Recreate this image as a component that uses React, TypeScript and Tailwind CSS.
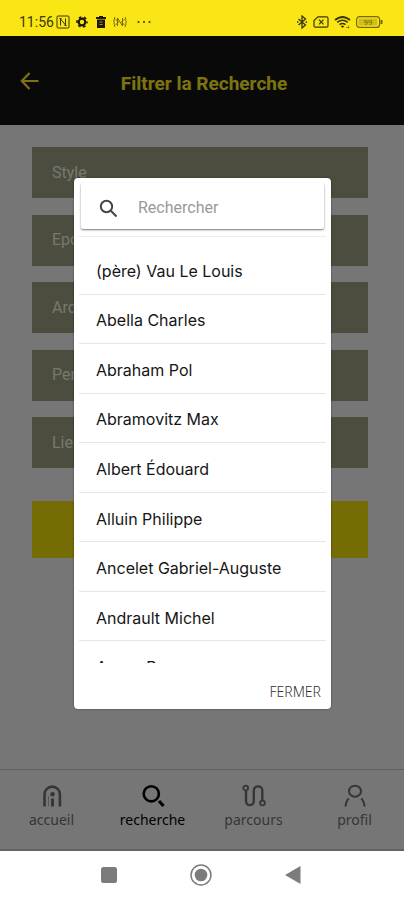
import React, { useState } from "react";

const fields = ["Style", "Epoque", "Architecte", "Periode", "Lieu"];

const architects = [
  "(père) Vau Le Louis",
  "Abella Charles",
  "Abraham Pol",
  "Abramovitz Max",
  "Albert Édouard",
  "Alluin Philippe",
  "Ancelet Gabriel-Auguste",
  "Andrault Michel",
  "Anger Roger",
];

function StatusBar() {
  return (
    <div className="flex h-9 items-end justify-between bg-[#fae614] pr-[21px] pb-[6px] pl-[19px] text-[#3b370c]">
      <div className="flex h-4 items-center">
        <span className="w-[37px] font-['Roboto',sans-serif] text-[14px] leading-4">11:56</span>
        <svg width="14" height="14" viewBox="0 0 14 14" fill="none" stroke="currentColor" strokeWidth="1">
          <rect x="1" y="1" width="12" height="12" rx="1" />
          <path d="M4.500 10.500V4l5 6V3.500M3.500 3.500h2M8.500 10.500h2" />
        </svg>
        <svg className="ml-[6px]" width="12" height="12" viewBox="0 0 12 12" fill="none" stroke="#1c1a05">
          <circle cx="6" cy="6" r="3.300" strokeWidth="2.200" />
          <circle cx="6" cy="6" r="5" strokeWidth="1.600" strokeDasharray="2.600 2.640" strokeDashoffset="1.300" />
        </svg>
        <svg className="ml-[7px]" width="12" height="12" viewBox="0 0 12 12" fill="#1c1a05">
          <path d="M4 0h4v1h3v2H1V1h3zM2 3.500h8V12H2z" />
          <path d="M4.500 6h3M4.500 8.500h3" stroke="#a6990d" strokeWidth="1" />
        </svg>
        <svg className="ml-[6px]" width="14" height="12" viewBox="0 0 14 12" fill="none" stroke="#756b0c" strokeWidth="1">
          <path d="M2 1C.6 4 .6 8 2 11M12 1c1.400 3 1.400 7 0 10M4.500 10V2l5 8V2M2.500 3l3 3-3 3M11.500 3l-3 3 3 3" />
        </svg>
        <svg className="ml-[10px]" width="14" height="4" viewBox="0 0 14 4" fill="currentColor">
          <circle cx="1.500" cy="2" r="1" />
          <circle cx="7" cy="2" r="1" />
          <circle cx="12.500" cy="2" r="1" />
        </svg>
      </div>
      <div className="flex h-4 items-center">
        <svg width="10" height="14" viewBox="0 0 10 14" fill="none" stroke="currentColor" strokeWidth="1.300">
          <path d="M1.500 4l7 6L5 13V1l3.500 3-7 6" />
          <path d="M0 7h1.500M8.500 7H10" />
        </svg>
        <svg className="ml-[6px]" width="16" height="12" viewBox="0 0 16 12" fill="none" stroke="currentColor" strokeWidth="1.200">
          <path d="M5 .8h8.500q1.500 0 1.500 1.500v7.400q0 1.500-1.500 1.500h-11Q1 11.200 1 9.700V4.500z" />
          <path d="M6 3.700l4.500 4.600M10.500 3.700L6 8.300" />
        </svg>
        <svg className="ml-[5px]" width="17" height="13" viewBox="0 0 17 13" fill="none" stroke="currentColor">
          <path d="M1 4Q8.500-2 16 4" strokeWidth="2" />
          <path d="M3.200 6.300q5.300-4.300 10.600 0M5.500 8.700q3-2.400 6 0" strokeWidth="1.500" />
          <path d="M6.800 10.200q1.700-1.200 3.400 0L8.500 12z" fill="currentColor" stroke="none" />
          <path d="M12 11.500h3.500M14.500 9.500v3" strokeWidth="0.800" opacity="0.600" />
        </svg>
        <svg className="ml-[5px]" width="27" height="12" viewBox="0 0 27 12" fill="none" stroke="#75690c">
          <rect x="0.600" y="0.600" width="23" height="10.800" rx="3" strokeWidth="1.200" />
          <rect x="2.500" y="2.500" width="19" height="7" rx="1" fill="#cfbf16" stroke="none" />
          <path d="M25.500 4v4" strokeWidth="2" />
          <text x="12" y="9" textAnchor="middle" fontSize="8" fontFamily="Roboto" fill="#75690c" stroke="none">99</text>
        </svg>
      </div>
    </div>
  );
}

function HomeIcon() {
  return (
    <svg width="20" height="22" viewBox="0 0 20 22" fill="none" stroke="currentColor" strokeWidth="2.600">
      <path d="M2.500 21.500V9.300a7.700 7.700 0 0 1 15.400 0v12.200" />
      <path d="M6.500 21.500V11" strokeWidth="1" opacity="0.500" />
      <path d="M10.500 13.500v8" strokeWidth="3" />
      <circle cx="10.500" cy="9.300" r="2.200" fill="currentColor" stroke="none" />
    </svg>
  );
}

function SearchTabIcon() {
  return (
    <svg width="24" height="24" viewBox="0 0 24 24" fill="none" stroke="currentColor">
      <circle cx="10.300" cy="9.800" r="7.600" strokeWidth="2.600" />
      <path d="M18 17l4.500 5" strokeWidth="3.200" />
    </svg>
  );
}

function RouteIcon() {
  return (
    <svg width="24" height="24" viewBox="0 0 24 24" fill="none" stroke="currentColor" strokeWidth="2.400">
      <circle cx="3.700" cy="4" r="2.400" strokeWidth="1.800" />
      <circle cx="20.500" cy="19" r="2.400" strokeWidth="1.800" />
      <path d="M4 6.500V17c0 5.500 7.800 5.500 7.800 0V6.500c0-5.500 8.500-5.500 8.500 0v10" />
    </svg>
  );
}

function ProfileIcon() {
  return (
    <svg width="24" height="24" viewBox="0 0 24 24" fill="none" stroke="currentColor" strokeWidth="2">
      <ellipse cx="12" cy="7.200" rx="6" ry="5.500" />
      <path d="M5.800 14.500Q3 17 2.500 22.500M18.200 14.500q2.800 2.500 3.300 8" />
    </svg>
  );
}

const tabs = [
  { label: "accueil", Icon: HomeIcon },
  { label: "recherche", Icon: SearchTabIcon },
  { label: "parcours", Icon: RouteIcon },
  { label: "profil", Icon: ProfileIcon },
];

function ArchitectDialog() {
  const [query, setQuery] = useState("");
  const shown = architects.filter((a) => a.toLowerCase().includes(query.toLowerCase()));
  return (
    <div className="absolute inset-0 flex items-center justify-center bg-black/50 pr-[73px] pl-[74px]">
      <div role="dialog" aria-label="Architecte" className="w-full max-w-md rounded-[4px] bg-white pt-[5px] shadow-[0_0_2px_#0008]">
        <label className="mx-[7px] flex h-[46px] items-center rounded-[2px] bg-white pl-[18px] shadow-[0_1px_2px_#0008]">
          <svg className="mt-1 shrink-0" width="19" height="19" viewBox="0 0 19 19" fill="none" stroke="#444" strokeWidth="2">
            <circle cx="7.500" cy="7.500" r="5.700" />
            <path d="M11.800 11.800l5.700 5.700" />
          </svg>
          <input
            aria-label="Rechercher"
            placeholder="Rechercher"
            value={query}
            onChange={(e) => setQuery(e.target.value)}
            className="mt-1 ml-5 w-full min-w-0 bg-transparent font-['Roboto',sans-serif] text-[16px] leading-5 outline-none placeholder:text-[#999]"
          />
        </label>
        <div className="mx-[5px] mt-[7px] h-[427px] overflow-hidden border-t border-[#ececec] pt-2">
          <ul className="grid h-[446px] grid-rows-9">
            {shown.map((name) => (
              <li key={name} className="border-b border-[#e6e6e6]">
                <button className="h-full w-full truncate pt-[3px] pl-[17px] text-left font-['Inter',sans-serif] text-[16px] leading-5 text-[#161616]">
                  {name}
                </button>
              </li>
            ))}
          </ul>
        </div>
        <div className="flex h-[46px] items-center justify-end pt-3 pr-[10px]">
          <button className="font-['Noto_Sans',sans-serif] text-[14px] leading-5 font-light text-[#333]">FERMER</button>
        </div>
      </div>
    </div>
  );
}

export default function App() {
  return (
    <div className="flex min-h-screen flex-col bg-white">
      <StatusBar />
      <div className="relative flex grow flex-col bg-[#ececec]">
        <header className="grid h-[89px] grid-cols-[52px_1fr_48px] items-center bg-[#121212] pt-[6px] text-[#fae820]">
          <button aria-label="Retour" className="mb-[5px] pl-5">
            <svg width="19" height="18" viewBox="0 0 19 18" fill="none" stroke="currentColor" strokeWidth="2.200">
              <path d="M18.500 9H2M9.500 1L1.800 9l7.700 8" />
            </svg>
          </button>
          <h1 className="text-center font-['Roboto',sans-serif] text-[19px] leading-6 font-bold">Filtrer la Recherche</h1>
        </header>
        <main className="grow pt-[22px] pr-9 pl-8">
          <div className="flex h-[321px] flex-col justify-between">
            {fields.map((field) => (
              <button
                key={field}
                className="h-[51px] bg-[#989a7e] pl-5 text-left font-['Roboto',sans-serif] text-[16px] text-[#eeeede]"
              >
                {field}
              </button>
            ))}
          </div>
          <button aria-label="Rechercher" className="mt-[33px] h-[57px] w-full bg-[#ecd80a]" />
        </main>
        <nav className="grid h-[82px] grid-cols-4 border-t border-b-2 border-t-[#bcbcbc] border-b-[#c4c4c4]">
          {tabs.map(({ label, Icon }) => (
            <a
              key={label}
              href={"#" + label}
              className={
                "flex flex-col items-center pt-[14px] pl-[2px] font-['Noto_Sans',sans-serif] text-[14px] leading-5 " +
                (label === "recherche" ? "text-black" : "text-[#6c6c6c]")
              }
            >
              <span className="flex h-6 items-center">
                <Icon />
              </span>
              <span className="mt-[2px]">{label}</span>
            </a>
          ))}
        </nav>
        <ArchitectDialog />
      </div>
      <div className="flex h-[49px] items-center justify-center gap-[68px] pr-[2px] pb-[2px] text-[#7c7c7c]">
        <button aria-label="Applications récentes" className="flex w-6 justify-center">
          <svg width="16" height="16" viewBox="0 0 16 16" fill="currentColor">
            <rect width="16" height="16" rx="2.500" />
          </svg>
        </button>
        <button aria-label="Accueil" className="flex w-6 justify-center">
          <svg width="22" height="22" viewBox="0 0 22 22" fill="none" stroke="currentColor" strokeWidth="1.500">
            <circle cx="11" cy="11" r="10" />
            <circle cx="11" cy="11" r="6.300" fill="currentColor" stroke="none" />
          </svg>
        </button>
        <button aria-label="Précédent" className="flex w-6 justify-center">
          <svg width="16" height="18" viewBox="0 0 16 18" fill="currentColor">
            <path d="M15.500 0v18L0 9z" />
          </svg>
        </button>
      </div>
    </div>
  );
}
